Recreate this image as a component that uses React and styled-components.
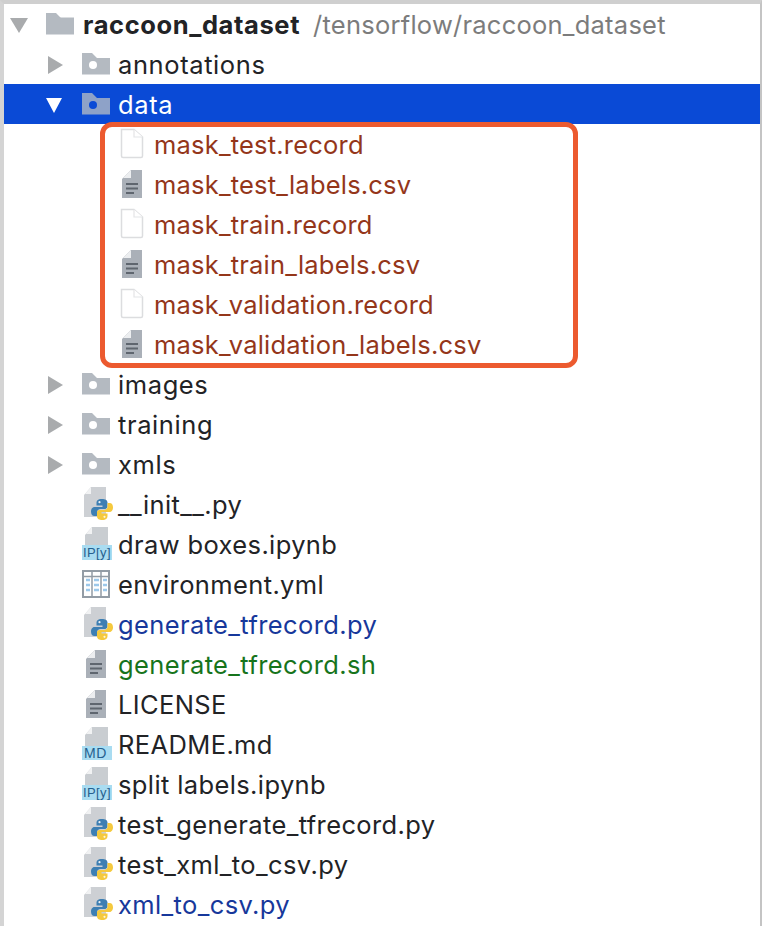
import React from 'react';
import styled, { createGlobalStyle } from 'styled-components';

const Global = createGlobalStyle`
  html, body { margin: 0; background: #fff; }
  body { font-family: Inter, "Liberation Sans", sans-serif; }
`;

const Panel = styled.div`
  width: 762px;
  height: 926px;
  box-sizing: border-box;
  overflow: hidden;
  background: #fff;
  border-top: 4px solid #cfcfcf;
  border-left: 4px solid #d4d4d4;
  border-right: 2px solid #c4c4c4;
`;

const Row = styled.div`
  height: 40px;
  display: flex;
  align-items: center;
  box-sizing: border-box;
  padding-left: ${p => 6 + p.$depth * 36}px;
  background: ${p => (p.$selected ? '#0a4ad6' : 'transparent')};
  color: ${p => p.$color || '#222326'};
`;

const Slot = styled.span`
  flex: none;
  width: 36px;
  height: 40px;
  display: block;
  svg { display: block; overflow: visible; }
`;

const Label = styled.span`
  font-size: 25.5px;
  line-height: 40px;
  letter-spacing: ${p => p.$spacing ?? 0.38}px;
  white-space: nowrap;
  font-weight: ${p => (p.$bold ? 700 : 400)};
  margin-top: 2px;
  margin-left: ${p => (p.$bold ? 1 : 0)}px;
`;

const Path = styled.span`
  font-size: 25.5px;
  line-height: 40px;
  letter-spacing: 0.24px;
  color: #7c7c7c;
  margin-top: 2px;
  margin-left: 13px;
  white-space: nowrap;
`;

const Group = styled.div`
  position: relative;
`;

const Highlight = styled.div`
  position: absolute;
  left: 96px;
  top: -2px;
  width: 478px;
  height: 246px;
  box-sizing: border-box;
  border: 5px solid #ec5a2f;
  border-radius: 12px;
  pointer-events: none;
`;

const Svg = ({ children }) => <svg width="36" height="40" viewBox="0 0 36 40">{children}</svg>;

const Arrow = ({ open, color = '#a9abad', big }) => (
  <Svg>
    {open
      ? <polygon points={big ? '0,14 18,14 9,29' : '0,14 16,14 8,29'} fill={color} />
      : <polygon points="2,12 17,21 2,30" fill={color} />}
  </Svg>
);

const Folder = ({ dot, selected, root }) => {
  const body = selected ? '#8ea2c8' : '#b4bac1';
  const hole = selected ? '#0a4ad6' : '#fff';
  return (
    <Svg>
      <path d="M0 9 H10 L15 14 H28 V30.5 H0 Z" fill={body} />
      {dot && <circle cx="11" cy="21" r="4" fill={hole} />}
      {root && <path d="M0 14 H28" stroke={body} />}
    </Svg>
  );
};

const PlainDoc = () => (
  <Svg>
    <path d="M3.5 5.5 H16 L24.5 13 V32 Q24.5 33.5 23 33.5 H5 Q3.5 33.5 3.5 32 Z" fill="#fff" stroke="#dcdddf" strokeWidth="1.5" />
    <path d="M16 5.5 V13 H24.5" fill="#fff" stroke="#e4e5e7" strokeWidth="1.2" />
  </Svg>
);

const TextDoc = ({ x = 4 }) => (
  <Svg>
    <g transform={`translate(${x} 6)`}>
      <path d="M9 0 H20 V28 H0 V9 Z" fill="#aab0b8" />
      <path d="M9 0 V8 H1 Z" fill="#eceef0" />
      <path d="M4 14 H16 M4 18.5 H16 M4 23 H12" stroke="#5f666f" strokeWidth="2" />
    </g>
  </Svg>
);

const Python = ({ x, y }) => (
  <g transform={`translate(${x} ${y})`}>
    <path d="M11 0 C6.5 0 5.5 2 5.5 4 V6.5 H11.5 V8 H3.5 C1 8 0 10.5 0 12.5 C0 15 1 17 3.5 17 H6 V13.5 C6 11.5 7.5 10 9.5 10 H14 C15.5 10 16.5 9 16.5 7.5 V3.5 C16.5 1 14 0 11 0 Z" fill="#3d7fb3" />
    <circle cx="8.5" cy="3.2" r="1.1" fill="#e6f0f7" />
    <path d="M11 21 C15.5 21 16.5 19 16.5 17 V14.5 H10.5 V13 H18.5 C21 13 22 10.5 22 8.5 C22 6 21 4 18.5 4 H16.5 V7.5 C16.5 9.5 15 11 13 11 H8.5 C7 11 6 12 6 13.5 V17.5 C6 20 8.5 21 11 21 Z" fill="#f5c93e" />
    <circle cx="13.5" cy="17.8" r="1.1" fill="#fff6d6" />
  </g>
);

const PyDoc = () => (
  <Svg>
    <path d="M9 3 H24 V33 H2 V11 Z" fill="#cdd0d4" />
    <path d="M9 3 V10 H3 Z" fill="#f1f2f3" />
    <Python x={9} y={15} />
  </Svg>
);

const BandLabel = styled.text`
  font-family: "Liberation Sans", Arial, sans-serif;
  font-size: ${p => p.$size}px;
  fill: #25608f;
  letter-spacing: ${p => p.$spacing}px;
`;

const BandDoc = ({ text }) => {
  const md = text === 'MD';
  return (
    <Svg>
      <path d="M10 3 H26 V24 H3 V11 Z" fill="#c9cdd1" />
      <path d="M10 3 V10 H4 Z" fill="#f1f2f3" />
      <rect x="0" y={md ? 22 : 21} width="30" height={md ? 14 : 15} fill="#a9dcf1" />
      <BandLabel x={md ? 2 : 1} y={md ? 34 : 33} $size={md ? 14 : 13} $spacing={md ? 0.6 : 0.4}>{text}</BandLabel>
    </Svg>
  );
};

const TableDoc = () => (
  <Svg>
    <rect x="1" y="7" width="26" height="26" fill="#fff" stroke="#939ca5" strokeWidth="2" />
    <path d="M1 12.5 H27 M10 7 V33 M19 7 V33" stroke="#939ca5" strokeWidth="1.5" />
    <path d="M4 16 H8 M4 21 H8 M4 26 H8 M12 16 H17 M12 21 H17 M12 26 H17 M21 16 H25 M21 21 H25 M21 26 H25" stroke="#9cc8ea" strokeWidth="2.6" />
  </Svg>
);

const icons = {
  plain: <PlainDoc />,
  text: <TextDoc />,
  py: <PyDoc />,
  nb: <BandDoc text="IP[y]" />,
  md: <BandDoc text="MD" />,
  table: <TableDoc />,
};

const mask = '#94361a';
const blue = '#17389b';
const green = '#17741c';

const masks = [
  ['plain', 'mask_test.record'],
  ['text', 'mask_test_labels.csv'],
  ['plain', 'mask_train.record'],
  ['text', 'mask_train_labels.csv'],
  ['plain', 'mask_validation.record'],
  ['text', 'mask_validation_labels.csv'],
];

const files = [
  ['py', '__init__.py'],
  ['nb', 'draw boxes.ipynb'],
  ['table', 'environment.yml'],
  ['py', 'generate_tfrecord.py', blue],
  ['text', 'generate_tfrecord.sh', green],
  ['text', 'LICENSE'],
  ['md', 'README.md'],
  ['nb', 'split labels.ipynb'],
  ['py', 'test_generate_tfrecord.py'],
  ['py', 'test_xml_to_csv.py'],
  ['py', 'xml_to_csv.py', blue],
];

const FolderRow = ({ name }) => (
  <Row $depth={1}>
    <Slot><Arrow /></Slot>
    <Slot><Folder dot /></Slot>
    <Label $spacing={0.6}>{name}</Label>
  </Row>
);

export default function App() {
  return (
    <Panel>
      <Global />
      <Row $depth={0}>
        <Slot><Arrow open big /></Slot>
        <Slot><Folder root /></Slot>
        <Label $bold $spacing={0.6}>raccoon_dataset</Label>
        <Path>/tensorflow/raccoon_dataset</Path>
      </Row>
      <FolderRow name="annotations" />
      <Row $depth={1} $selected $color="#fff">
        <Slot><Arrow open color="#fff" /></Slot>
        <Slot><Folder dot selected /></Slot>
        <Label $spacing={0.6}>data</Label>
      </Row>
      <Group>
        {masks.map(([icon, name]) => (
          <Row key={name} $depth={2} $color={mask}>
            <Slot />
            <Slot>{icons[icon]}</Slot>
            <Label $spacing={0.2}>{name}</Label>
          </Row>
        ))}
        <Highlight />
      </Group>
      <FolderRow name="images" />
      <FolderRow name="training" />
      <FolderRow name="xmls" />
      {files.map(([icon, name, color]) => (
        <Row key={name} $depth={1} $color={color}>
          <Slot />
          <Slot>{icons[icon]}</Slot>
          <Label>{name}</Label>
        </Row>
      ))}
    </Panel>
  );
}
